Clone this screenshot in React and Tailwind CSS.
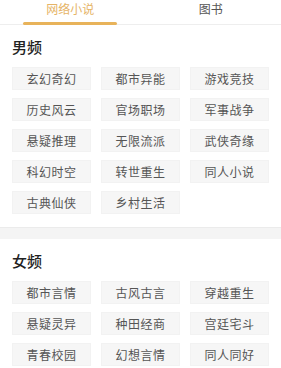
import React from "react";

const male = [
  "玄幻奇幻", "都市异能", "游戏竞技",
  "历史风云", "官场职场", "军事战争",
  "悬疑推理", "无限流派", "武侠奇缘",
  "科幻时空", "转世重生", "同人小说",
  "古典仙侠", "乡村生活",
];
const female = [
  "都市言情", "古风古言", "穿越重生",
  "悬疑灵异", "种田经商", "宫廷宅斗",
  "青春校园", "幻想言情", "同人同好",
];

function Section({ title, items, last }) {
  return (
    <div className={`px-[12px] pt-[12px] ${last ? "pb-[12px]" : "pb-[13px]"}`}>
      <div className="text-[15px] leading-[20px] text-[#222] font-medium">{title}</div>
      <div className="mt-[10px] grid grid-cols-3 gap-x-[10px] gap-y-[8px]">
        {items.map((t) => (
          <div
            key={t}
            className="h-[23px] flex items-center justify-center bg-[#f6f6f6] border border-[#f2f2f2] text-[12px] text-[#555] tracking-[0.5px]"
          >
            {t}
          </div>
        ))}
      </div>
    </div>
  );
}

export default function App() {
  return (
    <div
      className="w-[281px] h-[368px] overflow-hidden bg-white"
      style={{ fontFamily: '"Noto Sans CJK SC", "Noto Sans", sans-serif' }}
    >
      <div className="flex h-[25px] border-b border-[#eeeeee]">
        <div className="flex-1 flex flex-col items-center">
          <span className="text-[12px] leading-[18px] text-[#e6b466]">网络小说</span>
          <div className="mt-auto h-[3px] w-[94px] bg-[#e8b35a] rounded-full translate-y-[1px]" />
        </div>
        <div className="flex-1 flex flex-col items-center">
          <span className="text-[12px] leading-[18px] text-[#555]">图书</span>
        </div>
      </div>
      <Section title="男频" items={male} />
      <div className="h-[12px] bg-[#f4f4f4] border-t border-[#ebebeb]" />
      <Section title="女频" items={female} last />
    </div>
  );
}
